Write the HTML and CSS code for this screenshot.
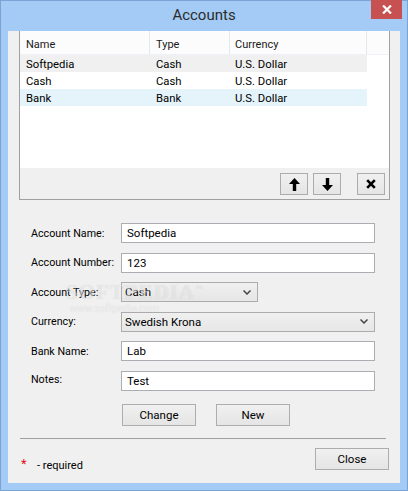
FILE: index.html
```html
<!DOCTYPE html>
<html>
<head>
<meta charset="utf-8">
<link rel="stylesheet" href="styles.css">
</head>
<body>
<div class="window">
  <div class="titlebar">
    <div></div>
    <div class="title">Accounts</div>
    <div class="close-x">
      <svg width="10" height="9" viewBox="0 0 10 9"><path d="M1 0.5 L9 8.5 M9 0.5 L1 8.5" stroke="#fff" stroke-width="2.2" fill="none"/></svg>
    </div>
  </div>
  <div class="client">
    <div class="listgroup">
      <div class="list">
        <div class="lhead">
          <div class="cell c1">Name</div>
          <div class="cell c2">Type</div>
          <div class="cell c3">Currency</div>
          <div class="cell c4"></div>
        </div>
        <div class="row sel"><div class="cell c1">Softpedia</div><div class="cell c2">Cash</div><div class="cell c3">U.S. Dollar</div></div>
        <div class="row"><div class="cell c1">Cash</div><div class="cell c2">Cash</div><div class="cell c3">U.S. Dollar</div></div>
        <div class="row hot"><div class="cell c1">Bank</div><div class="cell c2">Bank</div><div class="cell c3">U.S. Dollar</div></div>
      </div>
      <div class="toolbar">
        <div class="tbtn">
          <svg width="11" height="13" viewBox="0 0 11 13"><path d="M5.5 0 L11 6 L7.2 6 L7.2 13 L3.8 13 L3.8 6 L0 6 Z" fill="#000"/></svg>
        </div>
        <div class="tbtn">
          <svg width="11" height="13" viewBox="0 0 11 13"><path d="M5.5 13 L11 7 L7.2 7 L7.2 0 L3.8 0 L3.8 7 L0 7 Z" fill="#000"/></svg>
        </div>
        <div class="tbtn del">
          <svg width="10" height="10" viewBox="0 0 10 10"><path d="M1.2 1.2 L8.8 8.8 M8.8 1.2 L1.2 8.8" stroke="#000" stroke-width="2.6" fill="none"/></svg>
        </div>
      </div>
    </div>

    <div class="form">
      <div class="label">Account Name:</div>
      <div class="field">Softpedia</div>
      <div class="label">Account Number:</div>
      <div class="field">123</div>
      <div class="label">Account Type:</div>
      <div class="combo short"><span>Cash</span><svg width="8" height="5" viewBox="0 0 8 5"><path d="M0.5 0.5 L4 4 L7.5 0.5" stroke="#444" stroke-width="1.5" fill="none"/></svg></div>
      <div class="label">Currency:</div>
      <div class="combo"><span>Swedish Krona</span><svg width="8" height="5" viewBox="0 0 8 5"><path d="M0.5 0.5 L4 4 L7.5 0.5" stroke="#444" stroke-width="1.5" fill="none"/></svg></div>
      <div class="label">Bank Name:</div>
      <div class="field">Lab</div>
      <div class="label notes">Notes:</div>
      <div class="field">Test</div>
    </div>

    <div class="actions">
      <div class="btn">Change</div>
      <div class="btn">New</div>
    </div>

    <div class="sep"></div>

    <div class="footer">
      <div class="req"><span class="star">*</span><span>- required</span></div>
      <div class="btn">Close</div>
    </div>

    <div class="wm1">SOFTPEDIA<sup>™</sup></div>
    <div class="wm2">www.softpedia.com</div>
  </div>
</div>
</body>
</html>
```

FILE: styles.css
```css
html, body {
  margin: 0;
  padding: 0;
  background: #a3cbf5;
}
.window {
  width: 408px;
  height: 491px;
  box-sizing: border-box;
  border: 1px solid #7aa3d6;
  background: #a3cbf5;
  font-family: Roboto, "Liberation Sans", sans-serif;
  font-size: 11px;
  color: #000;
}
.titlebar {
  height: 30px;
  display: grid;
  grid-template-columns: 1fr auto 1fr;
  align-items: start;
}
.title {
  font-size: 15px;
  color: #2b2b2b;
  line-height: 29px;
}
.close-x {
  justify-self: end;
  margin-right: 5px;
  width: 31px;
  height: 19px;
  margin-top: -1px;
  background: #c75050;
  display: flex;
  align-items: center;
  justify-content: center;
}
.client {
  position: relative;
  margin: 0 7px;
  height: 452px;
  background: #f0f0f0;
  overflow: hidden;
}
.listgroup {
  margin-left: 11px;
  width: 371px;
  height: 169px;
  box-sizing: border-box;
  border: 1px solid #a0a0a0;
  border-top: none;
  display: flex;
  flex-direction: column;
}
.list {
  height: 137px;
  background: #fff;
}
.lhead {
  display: flex;
  height: 24px;
  background: #fcfcfc;
  border-bottom: 1px solid #eef1f5;
  box-sizing: border-box;
}
.lhead .cell {
  border-right: 1px solid #e3e8ef;
  line-height: 24px;
  padding-top: 2px;
  color: #1a1a1a;
}
.cell {
  box-sizing: border-box;
  padding-left: 6px;
  white-space: nowrap;
}
.c1 { width: 130px; }
.c2 { width: 80px; }
.c3 { width: 137px; padding-left: 5px; }
.c4 { flex: 1; border-right: none !important; }
.row {
  display: flex;
  width: 347px;
  height: 17px;
  line-height: 19px;
  font-size: 11.3px;
}
.row.sel { background: #f0f0f0; }
.row.hot { background: #e5f3fb; }
.toolbar {
  flex: 1;
  display: flex;
  justify-content: flex-end;
  align-items: flex-start;
  padding: 5px 4px 0 0;
  gap: 5px;
}
.tbtn {
  width: 28px;
  height: 22px;
  box-sizing: border-box;
  border: 1px solid #acacac;
  background: linear-gradient(#f0f0f0, #e5e5e5);
  display: flex;
  align-items: center;
  justify-content: center;
}
.tbtn.del { margin-left: 11px; }
.form {
  margin: 23px 0 0 23px;
  display: grid;
  grid-template-columns: 90px 254px;
  grid-auto-rows: 20px;
  row-gap: 9.6px;
  align-items: center;
}
.label {
  color: #000;
  font-size: 10.7px;
  white-space: nowrap;
}
.label.notes { margin-top: -3px; }
.field {
  height: 20px;
  box-sizing: border-box;
  border: 1px solid #abadb3;
  background: #fff;
  padding-left: 5px;
  line-height: 18px;
  font-size: 11.5px;
}
.combo {
  height: 20px;
  box-sizing: border-box;
  border: 1px solid #acacac;
  background: linear-gradient(#f0f0f0, #e6e6e6);
  padding: 0 6px 0 3px;
  display: flex;
  align-items: center;
  justify-content: space-between;
  font-size: 11.5px;
}
.combo.short { width: 137px; }
.actions {
  margin: 13px 0 0 114px;
  display: flex;
  gap: 20px;
}
.btn {
  width: 74px;
  height: 22px;
  box-sizing: border-box;
  border: 1px solid #adadad;
  background: linear-gradient(#f0f0f0, #e5e5e5);
  text-align: center;
  line-height: 20px;
  font-size: 11.5px;
}
.sep {
  margin: 12px 0 0 12px;
  width: 366px;
  height: 1px;
  background: #a0a0a0;
}
.footer {
  margin: 9px 11px 0 13px;
  display: flex;
  justify-content: space-between;
  align-items: flex-start;
}
.req {
  padding-top: 11px;
  display: flex;
  align-items: center;
}
.star {
  color: #e0101a;
  font-size: 13px;
  width: 16px;
  line-height: 12px;
  margin-top: -3px;
}
.wm1 {
  position: absolute;
  left: 58px;
  top: 249px;
  font-family: "Liberation Serif", serif;
  font-weight: bold;
  font-size: 21px;
  letter-spacing: 1px;
  color: rgba(255, 255, 255, 0.5);
  text-shadow: 0 0 1px rgba(0, 0, 0, 0.15);
  pointer-events: none;
}
.wm1 sup { font-size: 8px; }
.wm2 {
  position: absolute;
  left: 62px;
  top: 272px;
  font-size: 10px;
  line-height: 12px;
  color: rgba(255, 255, 255, 0.6);
  text-shadow: 0 0 1px rgba(0, 0, 0, 0.15);
  pointer-events: none;
}
```
